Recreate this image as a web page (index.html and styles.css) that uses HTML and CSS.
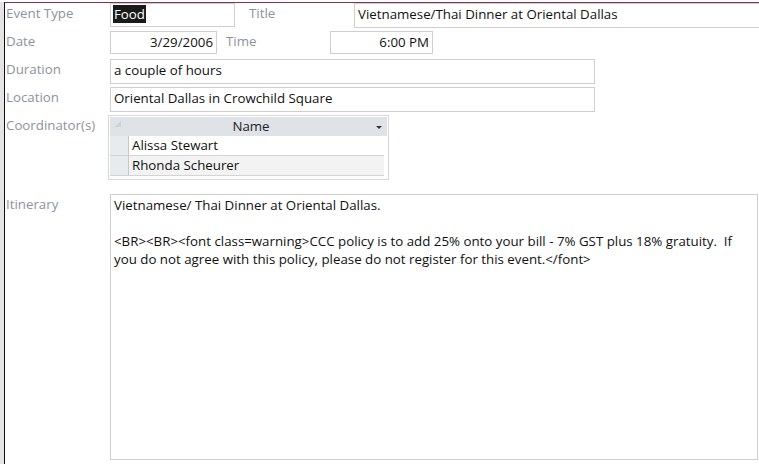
FILE: index.html
```html
<!DOCTYPE html>
<html lang="en">
<head>
    <meta charset="UTF-8">
    <title>Event Details</title>
    <link rel="stylesheet" href="styles.css">
</head>
<body>
    <div class="frame">
        <div class="form">
            <div class="row row-type">
                <label class="lbl">Event Type</label>
                <div class="box box-type"><span class="sel">Food</span></div>
                <label class="lbl lbl-title">Title</label>
                <div class="box box-title">Vietnamese/Thai Dinner at Oriental Dallas</div>
            </div>
            <div class="row row-date">
                <label class="lbl">Date</label>
                <div class="box box-date right">3/29/2006</div>
                <label class="lbl lbl-time">Time</label>
                <div class="box box-time right">6:00 PM</div>
            </div>
            <div class="row row-wide">
                <label class="lbl">Duration</label>
                <div class="box box-wide">a couple of hours</div>
            </div>
            <div class="row row-wide">
                <label class="lbl">Location</label>
                <div class="box box-wide">Oriental Dallas in Crowchild Square</div>
            </div>
            <div class="row row-coord">
                <label class="lbl">Coordinator(s)</label>
                <div class="subform">
                    <div class="sf-head">
                        <div class="sf-corner"><span class="tri"></span></div>
                        <div class="sf-col">Name</div>
                        <div class="sf-drop"><span class="arrow"></span></div>
                    </div>
                    <div class="sf-row">
                        <div class="sf-sel"></div>
                        <div class="sf-cell">Alissa Stewart</div>
                    </div>
                    <div class="sf-row alt">
                        <div class="sf-sel"></div>
                        <div class="sf-cell">Rhonda Scheurer</div>
                    </div>
                </div>
            </div>
            <div class="row row-itin">
                <label class="lbl">Itinerary</label>
                <div class="box box-itin">
                    <p>Vietnamese/ Thai Dinner at Oriental Dallas.</p>
                    <p>&lt;BR&gt;&lt;BR&gt;&lt;font class=warning&gt;CCC policy is to add 25% onto your bill - 7% GST plus 18% gratuity.&nbsp; If you do not agree with this policy, please do not register for this event.&lt;/font&gt;</p>
                </div>
            </div>
        </div>
    </div>
</body>
</html>
```

FILE: styles.css
```css
html, body {
    margin: 0;
    height: 100%;
    background: #ffffff;
    font-family: "Open Sans", "Noto Sans", sans-serif;
    font-size: 13.3px;
    color: #111;
    overflow: hidden;
}
.frame {
    height: 100%;
    border-left: 4px solid #e4e4e4;
}
.form {
    height: 100%;
    border-left: 1px solid #111;
    border-top: 1px solid #86324f;
    margin-top: 2px;
    padding-left: 1px;
}
.row {
    display: flex;
    align-items: flex-start;
}
.lbl {
    color: #8e939b;
    width: 104px;
    flex: none;
    padding-top: 1px;
}
.box {
    box-sizing: border-box;
    border: 1px solid #cfcfcf;
    padding: 1px 3px;
    white-space: nowrap;
    background: #fff;
}
.right {
    text-align: right;
}
.row-type {
    height: 28px;
}
.box-type {
    width: 125px;
    height: 24px;
    padding-left: 2px;
}
.sel {
    background: #1a1a1a;
    color: #fff;
    padding: 0 1px;
}
.lbl-title {
    width: 119px;
    padding-left: 14px;
    box-sizing: border-box;
}
.box-title {
    flex: 1;
    height: 25px;
    border-right: none;
}
.row-date {
    height: 28px;
}
.box-date {
    width: 107px;
    height: 23px;
}
.lbl-time {
    width: 113px;
    padding-left: 9px;
    box-sizing: border-box;
}
.box-time {
    width: 103px;
    height: 23px;
}
.row-wide {
    height: 28px;
}
.box-wide {
    width: 485px;
    height: 25px;
}
.row-coord {
    height: 79px;
}
.subform {
    margin-left: -2px;
    width: 281px;
    height: 65px;
    box-sizing: border-box;
    border: 1px solid #d8d8d8;
    padding: 1px;
}
.sf-head {
    display: flex;
    height: 19px;
    background: #dfe3e8;
}
.sf-corner {
    width: 19px;
    position: relative;
}
.tri {
    position: absolute;
    left: 5px;
    top: 4px;
    border-left: 6px solid transparent;
    border-bottom: 6px solid #cdd2d8;
}
.sf-col {
    flex: 1;
    text-align: center;
    line-height: 19px;
    color: #222;
}
.sf-drop {
    width: 14px;
    position: relative;
}
.arrow {
    position: absolute;
    left: 3px;
    top: 9px;
    border-left: 3px solid transparent;
    border-right: 3px solid transparent;
    border-top: 3px solid #333;
}
.sf-row {
    display: flex;
    height: 20px;
    margin-right: 3px;
}
.sf-sel {
    width: 18px;
    background: #e8ebee;
    border-bottom: 1px solid #d0d4d9;
}
.sf-cell {
    flex: 1;
    line-height: 19px;
    padding-left: 3px;
    border-left: 1px solid #c8c8c8;
    border-bottom: 1px solid #d4d4d4;
    background: #fff;
    color: #111;
}
.sf-row.alt .sf-cell {
    background: #f3f3f3;
}
.box-itin {
    width: 648px;
    height: 266px;
    white-space: normal;
    padding: 1px 22px 2px 3px;
    line-height: 18px;
}
.box-itin p {
    margin: 0 0 18px 0;
}
```
